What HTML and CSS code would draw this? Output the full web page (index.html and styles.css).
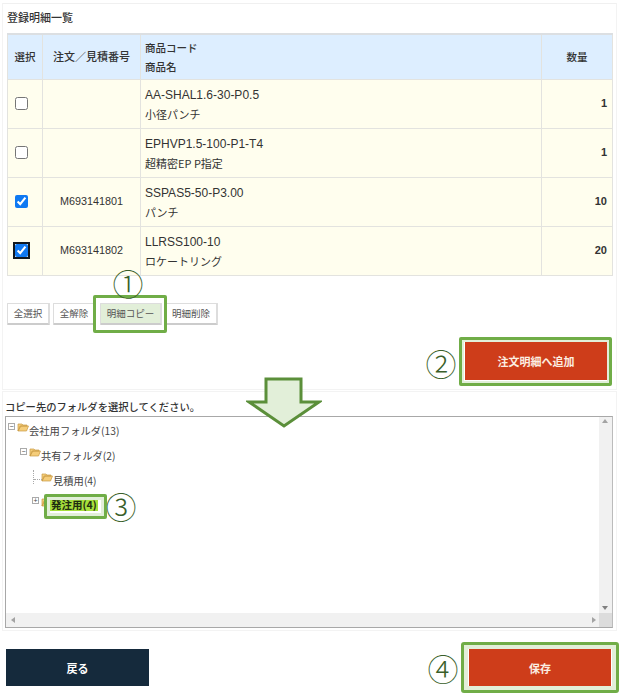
FILE: index.html
```html
<!DOCTYPE html>
<html lang="ja">
<head>
<meta charset="utf-8">
<title>登録明細一覧</title>
<link rel="stylesheet" href="styles.css">
</head>
<body>
<main class="page">
  <section class="panel list-panel">
    <h2 class="title">登録明細一覧</h2>
    <table class="items">
      <thead>
        <tr><th class="c-sel">選択</th><th class="c-no">注文／見積番号</th><th class="c-code">商品コード<br>商品名</th><th class="c-qty">数量</th></tr>
      </thead>
      <tbody>
        <tr><td class="center"><input type="checkbox"></td><td class="center"></td><td class="code"><span class="sku">AA-SHAL1.6-30-P0.5</span><br>小径パンチ</td><td class="qty">1</td></tr>
        <tr><td class="center"><input type="checkbox"></td><td class="center"></td><td class="code"><span class="sku">EPHVP1.5-100-P1-T4</span><br>超精密EP P指定</td><td class="qty">1</td></tr>
        <tr><td class="center"><input type="checkbox" checked></td><td class="center order">M693141801</td><td class="code"><span class="sku">SSPAS5-50-P3.00</span><br>パンチ</td><td class="qty">10</td></tr>
        <tr><td class="center"><input type="checkbox" class="focused" checked></td><td class="center order">M693141802</td><td class="code"><span class="sku">LLRSS100-10</span><br>ロケートリング</td><td class="qty">20</td></tr>
      </tbody>
    </table>
    <div class="tools">
      <button class="tool">全選択</button>
      <button class="tool">全解除</button>
      <button class="tool copy">明細コピー</button>
      <button class="tool">明細削除</button>
    </div>
    <div class="add-row"><button class="action">注文明細へ追加</button></div>
    <span class="mark hl-copy"></span>
    <span class="mark hl-add"></span>
    <span class="num n1">①</span>
    <span class="num n2">②</span>
  </section>

  <svg class="arrow" viewBox="0 0 76 52" width="76" height="52" aria-hidden="true">
    <path d="M20 2H55V25H73L38 49L3 25H20Z" fill="#e2efd9" stroke="#5b8f3a" stroke-width="3"/>
  </svg>

  <section class="panel tree-panel">
    <p class="prompt">コピー先のフォルダを選択してください。</p>
    <div class="tree-box">
      <div class="tree">
        <div class="node l0">
          <span class="toggle">−</span>
          <svg class="folder" viewBox="0 0 12 10" width="12" height="10"><path d="M1 9V2h4l1 1h4v1H4L1 9l2-5h8.500l-2 5z" fill="#f5cd7a" stroke="#c89b45" stroke-width=".7"/></svg>
          <span>会社用フォルダ(13)</span>
        </div>
        <div class="node l1">
          <span class="toggle">−</span>
          <svg class="folder" viewBox="0 0 12 10" width="12" height="10"><path d="M1 9V2h4l1 1h4v1H4L1 9l2-5h8.500l-2 5z" fill="#f5cd7a" stroke="#c89b45" stroke-width=".7"/></svg>
          <span>共有フォルダ(2)</span>
        </div>
        <div class="node l2">
          <span class="dots"></span>
          <svg class="folder" viewBox="0 0 12 10" width="12" height="10"><path d="M1 9V2h4l1 1h4v1H4L1 9l2-5h8.500l-2 5z" fill="#f5cd7a" stroke="#c89b45" stroke-width=".7"/></svg>
          <span>見積用(4)</span>
        </div>
        <div class="node l3">
          <span class="toggle">+</span>
          <svg class="folder" viewBox="0 0 12 10" width="12" height="10"><path d="M1 9V2h4l1 1h4v1H4L1 9l2-5h8.500l-2 5z" fill="#f5cd7a" stroke="#c89b45" stroke-width=".7"/></svg>
          <span class="selected">発注用(4)</span>
        </div>
      </div>
      <div class="sb-v"><span class="tri up"></span><span class="tri down"></span></div>
      <div class="sb-h"><span class="tri left"></span><span class="tri right"></span></div>
      <div class="sb-corner"></div>
    </div>
    <span class="num n3">③</span>
  </section>

  <div class="footer">
    <button class="action back">戻る</button>
    <div class="save-wrap"><button class="action">保存</button><span class="num n4">④</span></div>
  </div>
</main>
</body>
</html>
```

FILE: styles.css
```css
* { box-sizing: border-box; }
html, body { margin: 0; background: #fff; }
body {
  width: 622px;
  height: 697px;
  overflow: hidden;
  font-family: "Noto Sans CJK JP", "Liberation Sans", sans-serif;
  color: #333;
  font-size: 10px;
}
.page { position: relative; height: 697px; }
.panel { border: 1px solid #f3f3f3; }
button { font-family: inherit; cursor: pointer; }

.list-panel {
  position: absolute;
  left: 2px; top: 3px;
  width: 615px; height: 387px;
  padding: 0 4px;
  border-top-color: #f0f0f0;
}
.title { margin: 5px 0 0; height: 24px; font-size: 11px; line-height: 16px; font-weight: 500; color: #333; }

.items { border-collapse: collapse; table-layout: fixed; width: 606px; }
.items th, .items td { border: 1px solid #e3e3df; padding: 0 4px; line-height: 19px; }
.items th { background: #ddeeff; height: 45px; font-weight: 500; text-align: center; font-size: 10.500px; }
.items thead th { border-top: 2px solid #dcdfe2; }
.items th.c-no { font-size: 11px; padding: 0; }
.items td { background: #fffeee; height: 49px; font-size: 11px; }
.items td.code { padding-top: 2px; }
.items th.c-code { text-align: left; font-size: 10.500px; }
.sku { font-family: "Liberation Sans", sans-serif; font-size: 12px; }
.c-sel { width: 35px; }
.c-no { width: 98px; }
.c-qty { width: 71px; }
.items td.center { text-align: center; padding: 0; font-size: 10px; }
.items td.order { font-family: "Liberation Sans", sans-serif; font-size: 10.800px; }
.items td.qty { text-align: right; padding-right: 5px; font-family: "Liberation Sans", sans-serif; font-weight: 700; font-size: 11px; }
input[type=checkbox] { display: block; margin: 0 0 0 7px; width: 13px; height: 13px; accent-color: #0f79f2; }
input.focused { outline: 2px solid #101820; outline-offset: 0; border-radius: 3px; }

.tools { display: flex; gap: 3px; margin-top: 27px; height: 24px; }
.tool {
  height: 22px;
  padding: 0;
  width: 43px;
  border: 1px solid #ddd;
  border-bottom: 2px solid #ccc;
  border-right: 2px solid #ddd;
  border-radius: 1px;
  background: #fff;
  color: #555;
  font-size: 9.500px;
}
.tool.copy { width: 62px; margin-left: 1px; background: #e2efd9; }
.tool:nth-child(4) { width: 53px; }

.add-row { display: flex; justify-content: flex-end; margin-top: 15px; padding-right: 5px; }
.action {
  display: block;
  width: 142px; height: 38px;
  border: 0;
  background: #ce3d1a;
  color: #fbeee2;
  font-size: 11px;
  font-weight: 700;
}
.mark { position: absolute; border: 3px solid #70ad47; border-radius: 2px; pointer-events: none; }
.hl-copy { left: 90px; top: 291px; width: 74px; height: 38px; }
.hl-add { left: 456px; top: 333px; width: 153px; height: 49px; box-shadow: inset 0 0 0 2px #e2efd9; }

.num {
  position: absolute;
  font-family: "Noto Sans CJK JP", sans-serif;
  font-size: 31px;
  line-height: 32px;
  width: 32px;
  text-align: center;
  color: #3a5f2a;
  font-weight: 300;
}
.n1 { left: 109px; top: 263px; }
.n2 { left: 422px; top: 343px; }
.n3 { left: 102px; top: 98px; }
.n4 { left: -42px; top: 3px; }

.arrow { position: absolute; left: 246px; top: 377px; z-index: 2; }

.tree-panel {
  position: absolute;
  left: 2px; top: 391px;
  width: 615px; height: 240px;
  padding: 0 0 0 2px;
}
.prompt { margin: 8px 0 0; height: 16px; font-size: 10.300px; line-height: 14px; font-weight: 500; color: #333; white-space: nowrap; }
.tree-box {
  position: relative;
  width: 608px; height: 212px;
  border: 1px solid #a8a8a8;
  border-right-color: #bbb;
  background: #fff;
}
.tree { padding-top: 3px; font-size: 10.300px; color: #444; }
.node { position: relative; display: flex; align-items: center; height: 20px; margin-bottom: 5px; }
.node span { white-space: nowrap; }
.toggle {
  width: 7px; height: 7px;
  border: 1px solid #aaa;
  font-size: 7px; line-height: 5px;
  text-align: center;
  color: #444;
  margin-right: 2px;
  margin-top: -8px;
  font-family: "Liberation Sans", sans-serif;
}
.folder { flex: none; margin-top: -7px; }
.l0 { padding-left: 2px; }
.l1 { padding-left: 14px; }
.l2 { padding-left: 24px; }
.l3 { padding-left: 26px; }
.l3 .toggle { margin-top: -10px; }
.dots { position: relative; width: 8px; height: 14px; margin: -6px 0 0 3px; border-left: 1px dotted #aaa; }
.dots::after { content: ""; position: absolute; left: 0; bottom: 4px; width: 8px; border-top: 1px dotted #aaa; }
.selected {
  position: relative;
  top: -1px;
  z-index: 1;
  margin-left: -3px;
  padding: 0 1px;
  background: #a6e03c;
  color: #1f2d10;
  font-weight: 700;
  font-size: 10.500px;
  line-height: 13px;
}
.selected::after {
  content: "";
  position: absolute;
  left: -6px; right: -9px; top: -4px; bottom: -8px;
  border: 3px solid #70ad47;
  border-radius: 2px;
  box-shadow: inset 0 0 0 3px #e2efd9;
}
.sb-v { position: absolute; right: 0; top: 0; bottom: 14px; width: 13px; background: #f1f1f1; }
.sb-h { position: absolute; left: 0; right: 13px; bottom: 0; height: 14px; background: #f1f1f1; }
.sb-corner { position: absolute; right: 0; bottom: 0; width: 13px; height: 14px; background: #dcdcdc; }
.tri { position: absolute; width: 0; height: 0; border: 3px solid transparent; }
.tri.up { top: 2px; left: 3px; border-bottom: 4px solid #a3a3a3; border-top-width: 0; }
.tri.down { bottom: 3px; left: 3px; border-top: 4px solid #808080; border-bottom-width: 0; }
.tri.left { left: 5px; top: 4px; border-right: 4px solid #a3a3a3; border-left-width: 0; }
.tri.right { right: 3px; top: 4px; border-left: 4px solid #a3a3a3; border-right-width: 0; }

.footer { position: absolute; left: 6px; top: 649px; width: 605px; display: flex; justify-content: space-between; }
.back { width: 143px; height: 37px; background: #152a3c; color: #fff; }
.save-wrap { position: relative; width: 142px; height: 37px; }
.save-wrap .action { height: 37px; }
.save-wrap::after {
  content: "";
  position: absolute;
  inset: -7px -8px;
  border: 3px solid #70ad47;
  box-shadow: inset 0 0 0 4px #e2efd9;
  border-radius: 3px;
  pointer-events: none;
}
```
